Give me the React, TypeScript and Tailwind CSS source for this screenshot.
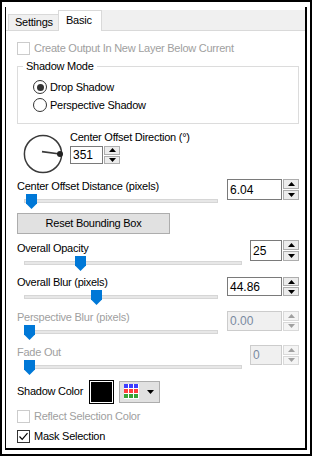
import React from 'react'

const font = "font-['Liberation_Sans','Arial',sans-serif]"

function Arrow({ up, disabled }: { up?: boolean; disabled?: boolean }) {
  return (
    <svg width="7" height="4" viewBox="0 0 7 4">
      <polygon
        points={up ? '3.5,0 7,4 0,4' : '0,0 7,0 3.5,4'}
        fill={disabled ? '#a0a0a0' : '#000'}
      />
    </svg>
  )
}

function SpinBox({
  value,
  className,
  disabled,
}: {
  value: string
  className: string
  disabled?: boolean
}) {
  return (
    <div className={`flex ${className}`}>
      <div
        className={`flex flex-1 items-center border pl-[2px] text-[12px] leading-none tracking-normal ${
          disabled
            ? 'border-[#cccccc] bg-[#f0f0f0] text-[#7a8aa0]'
            : 'border-[#7a7a7a] bg-white text-black'
        }`}
      >
        {value}
      </div>
      <div className="ml-[1px] flex w-[16px] flex-col gap-[1px]">
        <div
          className={`flex flex-1 items-center justify-center border ${
            disabled ? 'border-[#d9d9d9] bg-[#f4f4f4]' : 'border-[#adadad] bg-[#ececec]'
          }`}
        >
          <Arrow up disabled={disabled} />
        </div>
        <div
          className={`flex flex-1 items-center justify-center border ${
            disabled ? 'border-[#d9d9d9] bg-[#f4f4f4]' : 'border-[#adadad] bg-[#ececec]'
          }`}
        >
          <Arrow disabled={disabled} />
        </div>
      </div>
    </div>
  )
}

function Slider({ thumb }: { thumb: number }) {
  return (
    <div className="relative ml-[7px] mt-[1px] h-[15px]">
      <div className="mt-[5px] h-[4px] border border-[#d6d6d6] bg-[#e7e7e7]" />
      <svg
        className="absolute top-0"
        style={{ left: thumb }}
        width="11"
        height="15"
        viewBox="0 0 11 15"
      >
        <polygon points="0,0 11,0 11,9.5 5.5,15 0,9.5" fill="#0078d7" />
      </svg>
    </div>
  )
}

interface SliderRowProps {
  label: string
  value: string
  thumb: number
  wide?: boolean
  disabled?: boolean
  className: string
  inputClass: string
}

function SliderRow({ label, value, thumb, wide, disabled, className, inputClass }: SliderRowProps) {
  return (
    <div className={`flex items-start ${className}`}>
      <div className="flex flex-1 flex-col">
        <div className={`h-[14px] leading-[14px] ${disabled ? 'text-[#a0a0a0]' : 'text-black'}`}>
          {label}
        </div>
        <Slider thumb={thumb} />
      </div>
      <SpinBox
        value={value}
        disabled={disabled}
        className={`${wide ? 'ml-[9px] w-[72px]' : 'ml-[8px] w-[49px]'} ${inputClass}`}
      />
    </div>
  )
}

function CheckBox({
  label,
  checked,
  disabled,
  className,
}: {
  label: string
  checked?: boolean
  disabled?: boolean
  className: string
}) {
  return (
    <div className={`flex h-[14px] items-center ${className}`}>
      <span
        className={`flex h-[13px] w-[13px] items-center justify-center border bg-white ${
          disabled ? 'border-[#cccccc]' : 'border-[#333333]'
        }`}
      >
        {checked && (
          <svg width="11" height="11" viewBox="0 0 11 11">
            <polyline points="1.5,5.5 4.2,8.3 9.5,2.2" fill="none" stroke="#000" strokeWidth="1.2" />
          </svg>
        )}
      </span>
      <span className={`ml-[4px] leading-[14px] ${disabled ? 'text-[#a0a0a0]' : 'text-black'}`}>
        {label}
      </span>
    </div>
  )
}

function Radio({ label, checked, className }: { label: string; checked?: boolean; className: string }) {
  return (
    <div className={`flex h-[16px] items-center ${className}`}>
      <span className="flex h-[14px] w-[14px] items-center justify-center rounded-full border border-[#333333] bg-white">
        {checked && <span className="h-[7px] w-[7px] rounded-full bg-[#333333]" />}
      </span>
      <span className="ml-[3px] leading-[14px]">{label}</span>
    </div>
  )
}

function ColorGrid() {
  const rows = ['#3d3dff', '#ff3d3d', '#36a336']
  return (
    <svg width="15" height="15" viewBox="0 0 15 15">
      <rect width="15" height="15" fill="#ffffff" />
      {rows.map((c, r) =>
        [0, 1, 2].map((col) => (
          <rect key={`${r}-${col}`} x={col * 5} y={r * 5} width="4" height="4" fill={c} />
        ))
      )}
    </svg>
  )
}

export default function App() {
  return (
    <div className={`h-[456px] w-[312px] border-2 border-black bg-white text-[11px] tracking-[-0.25px] text-black ${font}`}>
      <div className="ml-[3px] mt-[5px] flex h-[443px] w-[302px] flex-col border-b-2 border-l border-r-2 border-black">
        {/* Tabs */}
        <div className="flex h-[24px] items-end">
          <div className="h-[1px] w-[2px] bg-[#d9d9d9]" />
          <div className="flex h-[17px] w-[51px] items-center border border-[#d9d9d9] bg-[#f0f0f0] pl-[6px]">
            Settings
          </div>
          <div className="-ml-[1px] flex h-[21px] w-[44px] items-center border border-b-0 border-[#d9d9d9] bg-white pb-[1px] pl-[7px]">
            Basic
          </div>
          <div className="h-[21px] flex-1 border-b border-[#d9d9d9] bg-[#f0f0f0]" />
        </div>

        {/* Panel */}
        <div className="flex flex-1 flex-col pl-[11px] pr-[6px]">
          <CheckBox disabled label="Create Output In New Layer Below Current" className="mt-[10px]" />

          <fieldset className="mt-[4px] border border-[#dcdcdc] pb-[10px]">
            <legend className="ml-[5px] h-[14px] px-[3px] leading-[14px]">Shadow Mode</legend>
            <Radio checked label="Drop Shadow" className="ml-[15px] mt-[6px]" />
            <Radio label="Perspective Shadow" className="ml-[15px] mt-[2px]" />
          </fieldset>

          {/* Direction dial */}
          <div className="flex items-start">
            <svg className="ml-[6px] mt-[10px]" width="40" height="40" viewBox="0 0 40 40">
              <circle cx="20" cy="20" r="18.6" fill="none" stroke="#3a3a3a" strokeWidth="1.5" />
              <line x1="19" y1="17.6" x2="37" y2="20" stroke="#3a3a3a" strokeWidth="1.6" />
              <circle cx="37" cy="20" r="3" fill="#222222" />
            </svg>
            <div className="ml-[7px] mt-[6px] flex flex-col">
              <div className="h-[14px] leading-[14px]">Center Offset Direction (°)</div>
              <SpinBox value="351" className="mt-[2px] h-[18px] w-[50px]" />
            </div>
          </div>

          <SliderRow
            label="Center Offset Distance (pixels)"
            value="6.04"
            thumb={2}
            wide
            className="mt-[5px]"
            inputClass="h-[21px]"
          />

          <button className="mt-[4px] h-[21px] w-[153px] border border-[#adadad] bg-[#e1e1e1] text-center leading-[19px]">
            Reset Bounding Box
          </button>

          <SliderRow
            label="Overall Opacity"
            value="25"
            thumb={51}
            className="mt-[6px] pt-[1px]"
            inputClass="-mt-[1px] h-[21px]"
          />
          <SliderRow
            label="Overall Blur (pixels)"
            value="44.86"
            thumb={67}
            wide
            className="mt-[4px]"
            inputClass="mt-[2px] h-[19px]"
          />
          <SliderRow
            label="Perspective Blur (pixels)"
            value="0.00"
            thumb={0}
            wide
            disabled
            className="mt-[5px]"
            inputClass="mt-[1px] h-[20px]"
          />
          <SliderRow
            label="Fade Out"
            value="0"
            thumb={0}
            disabled
            className="mt-[5px]"
            inputClass="h-[20px]"
          />

          {/* Shadow color */}
          <div className="mt-[5px] flex h-[23px] items-center">
            <div className="w-[72px]">Shadow Color</div>
            <div className="h-[24px] w-[25px] border border-black bg-white p-[1px]">
              <div className="h-full w-full bg-black" />
            </div>
            <div className="ml-[5px] flex h-[22px] w-[41px] items-center border border-[#adadad] bg-[#e1e1e1] pl-[4px]">
              <ColorGrid />
              <svg className="ml-[8px]" width="7" height="4" viewBox="0 0 7 4">
                <polygon points="0,0 7,0 3.5,4" fill="#000" />
              </svg>
            </div>
          </div>

          <CheckBox disabled label="Reflect Selection Color" className="mt-[6px]" />
          <CheckBox checked label="Mask Selection" className="mt-[6px]" />
        </div>
      </div>
    </div>
  )
}
